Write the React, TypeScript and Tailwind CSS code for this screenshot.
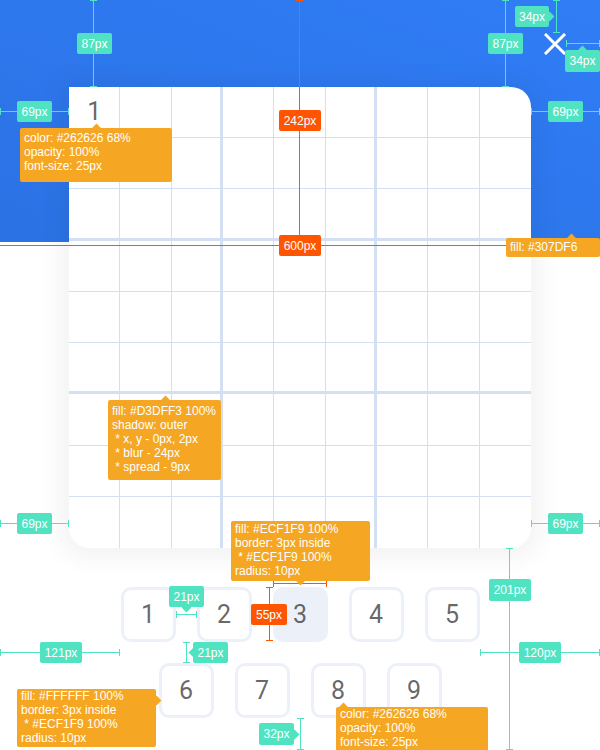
import React from "react";

const TEAL = "bg-[#50E3C2]";
const RED = "bg-[#FF5500]";
const ORANGE = "bg-[#F5A623]";

function Tag({ box, tone, children }: { box: string; tone: string; children: React.ReactNode }) {
  return (
    <div className={`absolute z-20 flex items-center justify-center rounded-[2px] text-[12px] leading-none text-white ${tone} ${box}`}>
      {children}
    </div>
  );
}

function HLine({ pos, tone }: { pos: string; tone: string }) {
  return (
    <div className={`absolute z-10 h-px ${tone} ${pos}`}>
      <span className={`absolute left-0 -top-[3px] h-[7px] w-px ${tone}`} />
      <span className={`absolute right-0 -top-[3px] h-[7px] w-px ${tone}`} />
    </div>
  );
}

function VLine({ pos, tone }: { pos: string; tone: string }) {
  return (
    <div className={`absolute z-10 w-px ${tone} ${pos}`}>
      <span className={`absolute top-0 -left-[3px] h-px w-[7px] ${tone}`} />
      <span className={`absolute bottom-0 -left-[3px] h-px w-[7px] ${tone}`} />
    </div>
  );
}

function Arrow({ pos, tone }: { pos: string; tone: string }) {
  return <span className={`absolute z-20 h-[7px] w-[7px] rotate-45 ${tone} ${pos}`} />;
}

function Note({ box, lines }: { box: string; lines: string[] }) {
  return (
    <div className={`absolute z-20 rounded-[2px] px-[4px] text-[12px] leading-[14px] whitespace-pre text-white ${ORANGE} ${box}`}>
      {lines.map((l) => (
        <div key={l}>{l}</div>
      ))}
    </div>
  );
}

function Board() {
  const cells = Array.from({ length: 81 }, (_, i) => i);
  return (
    <div className="relative z-0 mx-[69px] -mt-[155px] h-[461px] overflow-hidden rounded-tr-[20px] rounded-b-[20px] bg-white shadow-[0_2px_24px_9px_rgba(0,0,0,0.05)]">
      <div className="grid h-full grid-cols-9 grid-rows-9">
        {cells.map((i) => {
          const r = Math.floor(i / 9);
          const c = i % 9;
          const right = c === 8 ? "" : c % 3 === 2 ? "border-r-[3px]" : "border-r";
          const bottom = r === 8 ? "" : r % 3 === 2 ? "border-b-[3px]" : "border-b";
          return (
            <div
              key={i}
              className={`flex items-center justify-center border-[#D3DFF3] font-['Roboto'] text-[25px] text-[#262626]/70 ${right} ${bottom}`}
            >
              {i === 0 ? "1" : ""}
            </div>
          );
        })}
      </div>
    </div>
  );
}

function NumKey({ n, active }: { n: number; active?: boolean }) {
  return (
    <button
      className={`flex h-[55px] w-[55px] items-center justify-center rounded-[10px] border-[3px] border-[#ECF1F9] font-['Roboto'] text-[25px] text-[#262626]/70 ${
        active ? "bg-[#ECF1F9]" : "bg-white"
      }`}
    >
      {n}
    </button>
  );
}

export default function App() {
  return (
    <div className="relative h-[750px] w-[600px] overflow-hidden bg-white font-['Liberation_Sans',sans-serif]">
      {/* Header */}
      <div className="flex h-[242px] justify-end bg-gradient-to-bl from-[#307DF6] to-[#2B72E4] pr-[34px] pt-[33px]">
        <svg width="22" height="22" viewBox="0 0 22 22" className="text-white">
          <path d="M2 2 L20 20 M20 2 L2 20" stroke="currentColor" strokeWidth="3" strokeLinecap="square" />
        </svg>
      </div>

      <Board />

      {/* Keypad */}
      <div className="mt-[39px] flex flex-col items-center gap-[21px]">
        <div className="flex gap-[21px]">
          <NumKey n={1} />
          <NumKey n={2} />
          <NumKey n={3} active />
          <NumKey n={4} />
          <NumKey n={5} />
        </div>
        <div className="flex gap-[21px]">
          <NumKey n={6} />
          <NumKey n={7} />
          <NumKey n={8} />
          <NumKey n={9} />
        </div>
      </div>

      {/* Measurement lines */}
      <VLine tone={TEAL} pos="left-[93px] top-0 h-[87px]" />
      <HLine tone={TEAL} pos="left-0 top-[111px] w-[69px]" />
      <VLine tone={TEAL} pos="left-[505px] top-0 h-[87px]" />
      <VLine tone={TEAL} pos="left-[556px] top-0 h-[33px]" />
      <HLine tone={TEAL} pos="left-[566px] top-[43px] w-[34px]" />
      <HLine tone={TEAL} pos="left-[531px] top-[111px] w-[69px]" />
      <VLine tone={RED} pos="left-[299px] top-0 h-[242px]" />
      <div className={`absolute left-0 top-[245px] z-10 h-px w-[600px] ${RED}`} />
      <HLine tone={TEAL} pos="left-0 top-[523px] w-[69px]" />
      <HLine tone={TEAL} pos="left-[531px] top-[523px] w-[69px]" />
      <HLine tone={RED} pos="left-[273px] top-[583px] w-[54px]" />
      <VLine tone={RED} pos="left-[269px] top-[587px] h-[54px]" />
      <HLine tone={TEAL} pos="left-[176px] top-[614px] w-[21px]" />
      <VLine tone={TEAL} pos="left-[186px] top-[642px] h-[21px]" />
      <HLine tone={TEAL} pos="left-0 top-[652px] w-[120px]" />
      <HLine tone={TEAL} pos="left-[480px] top-[652px] w-[120px]" />
      <VLine tone={TEAL} pos="left-[509px] top-[548px] h-[202px]" />
      <VLine tone={TEAL} pos="left-[300px] top-[718px] h-[32px]" />

      {/* Size tags */}
      <Tag tone={TEAL} box="left-[77px] top-[33px] h-[21px] w-[35px]">87px</Tag>
      <Tag tone={TEAL} box="left-[17px] top-[101px] h-[21px] w-[35px]">69px</Tag>
      <Tag tone={TEAL} box="left-[488px] top-[33px] h-[21px] w-[35px]">87px</Tag>
      <Arrow tone={TEAL} pos="left-[546px] top-[13px]" />
      <Tag tone={TEAL} box="left-[515px] top-[6px] h-[21px] w-[34px]">34px</Tag>
      <Arrow tone={TEAL} pos="left-[579px] top-[47px]" />
      <Tag tone={TEAL} box="left-[565px] top-[50px] h-[22px] w-[35px]">34px</Tag>
      <Tag tone={TEAL} box="left-[548px] top-[101px] h-[21px] w-[35px]">69px</Tag>
      <Tag tone={RED} box="left-[279px] top-[110px] h-[21px] w-[42px]">242px</Tag>
      <Tag tone={RED} box="left-[279px] top-[235px] h-[21px] w-[42px]">600px</Tag>
      <Tag tone={TEAL} box="left-[17px] top-[513px] h-[21px] w-[35px]">69px</Tag>
      <Tag tone={TEAL} box="left-[548px] top-[513px] h-[21px] w-[35px]">69px</Tag>
      <Arrow tone={TEAL} pos="left-[183px] top-[604px]" />
      <Tag tone={TEAL} box="left-[169px] top-[586px] h-[21px] w-[35px]">21px</Tag>
      <Tag tone={RED} box="left-[251px] top-[604px] h-[21px] w-[36px]">55px</Tag>
      <Arrow tone={TEAL} pos="left-[190px] top-[649px]" />
      <Tag tone={TEAL} box="left-[193px] top-[642px] h-[21px] w-[35px]">21px</Tag>
      <Tag tone={TEAL} box="left-[40px] top-[642px] h-[21px] w-[42px]">121px</Tag>
      <Tag tone={TEAL} box="left-[519px] top-[642px] h-[21px] w-[42px]">120px</Tag>
      <Tag tone={TEAL} box="left-[489px] top-[579px] h-[22px] w-[42px]">201px</Tag>
      <Arrow tone={TEAL} pos="left-[291px] top-[731px]" />
      <Tag tone={TEAL} box="left-[259px] top-[723px] h-[22px] w-[35px]">32px</Tag>

      {/* Spec notes */}
      <Arrow tone={ORANGE} pos="left-[93px] top-[125px]" />
      <Note box="left-[20px] top-[128px] h-[54px] w-[152px] pt-[3px]" lines={["color: #262626 68%", "opacity: 100%", "font-size: 25px"]} />
      <Arrow tone={ORANGE} pos="left-[568px] top-[235px]" />
      <Note box="left-[506px] top-[238px] h-[19px] w-[94px] pt-[2px]" lines={["fill: #307DF6"]} />
      <Arrow tone={ORANGE} pos="left-[162px] top-[397px]" />
      <Note
        box="left-[108px] top-[400px] h-[80px] w-[113px] pt-[4px]"
        lines={["fill: #D3DFF3 100%", "shadow: outer", " * x, y - 0px, 2px", " * blur - 24px", " * spread - 9px"]}
      />
      <Arrow tone={ORANGE} pos="left-[297px] top-[577px]" />
      <Note
        box="left-[231px] top-[521px] h-[60px] w-[139px] pt-[1px]"
        lines={["fill: #ECF1F9 100%", "border: 3px inside", " * #ECF1F9 100%", "radius: 10px"]}
      />
      <Arrow tone={ORANGE} pos="left-[153px] top-[697px]" />
      <Note
        box="left-[17px] top-[689px] h-[58px] w-[139px] pt-0"
        lines={["fill: #FFFFFF 100%", "border: 3px inside", " * #ECF1F9 100%", "radius: 10px"]}
      />
      <Arrow tone={ORANGE} pos="left-[340px] top-[704px]" />
      <Note box="left-[336px] top-[707px] h-[50px] w-[152px] pt-0" lines={["color: #262626 68%", "opacity: 100%", "font-size: 25px"]} />
    </div>
  );
}
